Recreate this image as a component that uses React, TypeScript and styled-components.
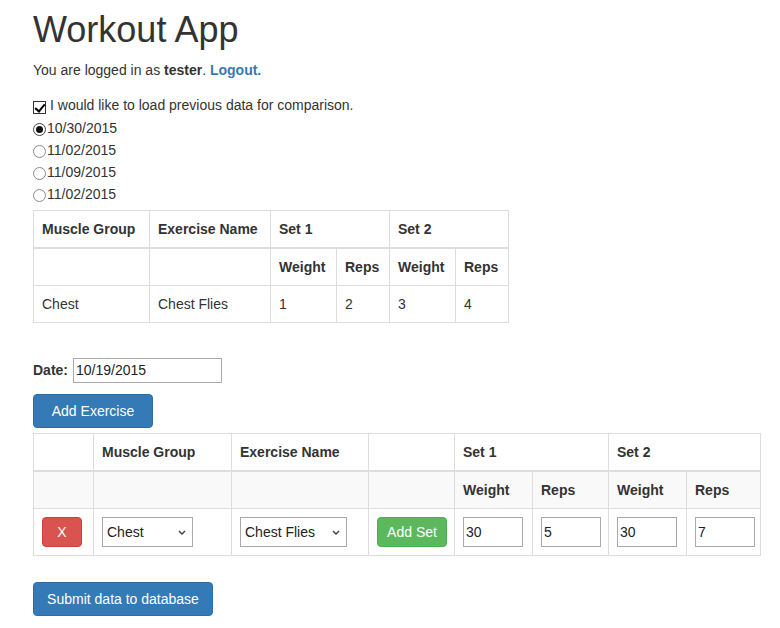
import React from "react";
import styled, { createGlobalStyle } from "styled-components";

const Global = createGlobalStyle`
  html, body { margin: 0; padding: 0; background: #fff; }
  body {
    font-family: "Liberation Sans", Arial, Helvetica, sans-serif;
    font-size: 14px;
    line-height: 20px;
    color: #333;
  }
  * { box-sizing: border-box; }
`;

const Page = styled.div`
  padding: 10px 18px 20px 33px;
`;

const Title = styled.h1`
  margin: 0 0 10px;
  font-size: 36px;
  line-height: 1.1;
  font-weight: 400;
  color: #333;
`;

const Info = styled.p`
  margin: 0;
`;

const Link = styled.a`
  color: #337ab7;
  font-weight: bold;
  text-decoration: none;
`;

const Options = styled.div`
  margin-top: 14px;
  display: flex;
  flex-direction: column;
`;

const OptionRow = styled.label<{ $h: number }>`
  display: flex;
  align-items: flex-start;
  height: ${(p) => p.$h}px;
  line-height: 22px;
`;

const CheckBox = styled.input`
  appearance: none;
  position: relative;
  width: 13px;
  height: 13px;
  margin: 7px 4px 0 0;
  border: 1px solid #333;
  background: #fff;
  flex: none;
  &:checked::after {
    content: "";
    position: absolute;
    left: 3px;
    top: 0px;
    width: 4px;
    height: 8px;
    border-right: 2.5px solid #000;
    border-bottom: 2.5px solid #000;
    transform: rotate(40deg);
  }
`;

const Radio = styled.input`
  appearance: none;
  position: relative;
  width: 13px;
  height: 13px;
  margin: 6px 1px 0 0;
  border: 1px solid #8a8a8a;
  border-radius: 50%;
  background: #fff;
  flex: none;
  &:checked {
    border-color: #444;
  }
  &:checked::after {
    content: "";
    position: absolute;
    left: 2px;
    top: 2px;
    width: 7px;
    height: 7px;
    border-radius: 50%;
    background: #111;
  }
`;

const Table = styled.table<{ $mt: number; $w: number }>`
  margin-top: ${(p) => p.$mt}px;
  width: ${(p) => p.$w}px;
  table-layout: fixed;
  border-collapse: collapse;
  border-spacing: 0;
  border: 1px solid #ddd;
`;

const Col = styled.col<{ $w: number }>`
  width: ${(p) => p.$w}px;
`;

const Row = styled.tr<{ $shade?: boolean }>`
  background: ${(p) => (p.$shade ? "#f9f9f9" : "transparent")};
`;

const Th = styled.th<{ $head?: boolean }>`
  padding: 8px;
  line-height: 20px;
  text-align: left;
  font-weight: bold;
  border: 1px solid #ddd;
  border-bottom-width: ${(p) => (p.$head ? 2 : 1)}px;
  vertical-align: bottom;
  white-space: nowrap;
`;

const Td = styled.td`
  padding: 8px;
  line-height: 20px;
  border: 1px solid #ddd;
  vertical-align: top;
  white-space: nowrap;
`;

const DateRow = styled.div`
  margin-top: 35px;
  display: flex;
  align-items: center;
  gap: 5px;
  height: 25px;
`;

const Label = styled.label`
  font-weight: bold;
`;

const TextInput = styled.input<{ $w: number; $h: number }>`
  width: ${(p) => p.$w}px;
  height: ${(p) => p.$h}px;
  padding: 1px 2px;
  border: 1px solid #a9a9a9;
  font-family: "Liberation Sans", Arial, sans-serif;
  font-size: 14px;
  color: #222;
  background: #fff;
  outline: none;
  display: block;
`;

const palette = {
  primary: { bg: "#337ab7", border: "#2e6da4" },
  danger: { bg: "#d9534f", border: "#d43f3a" },
  success: { bg: "#5cb85c", border: "#4cae4c" },
};

const Button = styled.button<{
  $variant: keyof typeof palette;
  $w: number;
  $h: number;
  $mt?: number;
}>`
  display: block;
  margin-top: ${(p) => p.$mt ?? 0}px;
  width: ${(p) => p.$w}px;
  height: ${(p) => p.$h}px;
  padding: 0;
  font-family: "Liberation Sans", Arial, sans-serif;
  font-size: 14px;
  line-height: 20px;
  text-align: center;
  color: #fff;
  background: ${(p) => palette[p.$variant].bg};
  border: 1px solid ${(p) => palette[p.$variant].border};
  border-radius: 4px;
  cursor: pointer;
`;

const SelectWrap = styled.div<{ $w: number }>`
  position: relative;
  width: ${(p) => p.$w}px;
  height: 30px;
`;

const Select = styled.select`
  appearance: none;
  width: 100%;
  height: 100%;
  padding: 0 18px 0 4px;
  border: 1px solid #a9a9a9;
  background: #fff;
  font-family: "Liberation Sans", Arial, sans-serif;
  font-size: 14px;
  color: #222;
  outline: none;
  border-radius: 0;
`;

const Chevron = styled.svg`
  position: absolute;
  right: 7px;
  top: 13px;
  width: 8px;
  height: 5px;
  pointer-events: none;
`;

function Dropdown({ w, value, options }: { w: number; value: string; options: string[] }) {
  return (
    <SelectWrap $w={w}>
      <Select defaultValue={value}>
        {options.map((o) => (
          <option key={o}>{o}</option>
        ))}
      </Select>
      <Chevron viewBox="0 0 8 5">
        <path d="M1 1 L4 4 L7 1" fill="none" stroke="#444" strokeWidth="1.5" />
      </Chevron>
    </SelectWrap>
  );
}

const firstCols = [116, 121, 66, 53, 66, 53];
const secondCols = [60, 138, 137, 86, 78, 76, 78, 74];
const sum = (a: number[]) => a.reduce((s, v) => s + v, 0);

export default function App() {
  const dates = ["10/30/2015", "11/02/2015", "11/09/2015", "11/02/2015"];
  return (
    <>
      <Global />
      <Page>
        <Title>Workout App</Title>
        <Info>
          You are logged in as <b>tester</b>. <Link href="#">Logout.</Link>
        </Info>

        <Options>
          <OptionRow $h={23}>
            <CheckBox type="checkbox" defaultChecked />
            I would like to load previous data for comparison.
          </OptionRow>
          {dates.map((d, i) => (
            <OptionRow $h={22} key={i}>
              <Radio type="radio" name="prev" defaultChecked={i === 0} />
              {d}
            </OptionRow>
          ))}
        </Options>

        <Table $mt={5} $w={sum(firstCols) + 1}>
          <colgroup>
            {firstCols.map((w, i) => (
              <Col $w={w} key={i} />
            ))}
          </colgroup>
          <thead>
            <Row>
              <Th $head>Muscle Group</Th>
              <Th $head>Exercise Name</Th>
              <Th $head colSpan={2}>Set 1</Th>
              <Th $head colSpan={2}>Set 2</Th>
            </Row>
          </thead>
          <tbody>
            <Row>
              <Th />
              <Th />
              <Th>Weight</Th>
              <Th>Reps</Th>
              <Th>Weight</Th>
              <Th>Reps</Th>
            </Row>
            <Row>
              <Td>Chest</Td>
              <Td>Chest Flies</Td>
              <Td>1</Td>
              <Td>2</Td>
              <Td>3</Td>
              <Td>4</Td>
            </Row>
          </tbody>
        </Table>

        <DateRow>
          <Label htmlFor="date">Date:</Label>
          <TextInput id="date" $w={149} $h={25} defaultValue="10/19/2015" />
        </DateRow>

        <Button $variant="primary" $w={120} $h={34} $mt={11}>
          Add Exercise
        </Button>

        <Table $mt={5} $w={sum(secondCols) + 1}>
          <colgroup>
            {secondCols.map((w, i) => (
              <Col $w={w} key={i} />
            ))}
          </colgroup>
          <thead>
            <Row>
              <Th $head />
              <Th $head>Muscle Group</Th>
              <Th $head>Exercise Name</Th>
              <Th $head />
              <Th $head colSpan={2}>Set 1</Th>
              <Th $head colSpan={2}>Set 2</Th>
            </Row>
          </thead>
          <tbody>
            <Row $shade>
              <Th />
              <Th />
              <Th />
              <Th />
              <Th>Weight</Th>
              <Th>Reps</Th>
              <Th>Weight</Th>
              <Th>Reps</Th>
            </Row>
            <Row>
              <Td>
                <Button $variant="danger" $w={40} $h={30}>
                  X
                </Button>
              </Td>
              <Td>
                <Dropdown w={91} value="Chest" options={["Chest", "Back", "Legs", "Arms"]} />
              </Td>
              <Td>
                <Dropdown
                  w={107}
                  value="Chest Flies"
                  options={["Chest Flies", "Bench Press", "Push Ups"]}
                />
              </Td>
              <Td>
                <Button $variant="success" $w={70} $h={30}>
                  Add Set
                </Button>
              </Td>
              <Td>
                <TextInput $w={60} $h={30} defaultValue="30" />
              </Td>
              <Td>
                <TextInput $w={60} $h={30} defaultValue="5" />
              </Td>
              <Td>
                <TextInput $w={60} $h={30} defaultValue="30" />
              </Td>
              <Td>
                <TextInput $w={60} $h={30} defaultValue="7" />
              </Td>
            </Row>
          </tbody>
        </Table>

        <Button $variant="primary" $w={180} $h={34} $mt={26}>
          Submit data to database
        </Button>
      </Page>
    </>
  );
}
